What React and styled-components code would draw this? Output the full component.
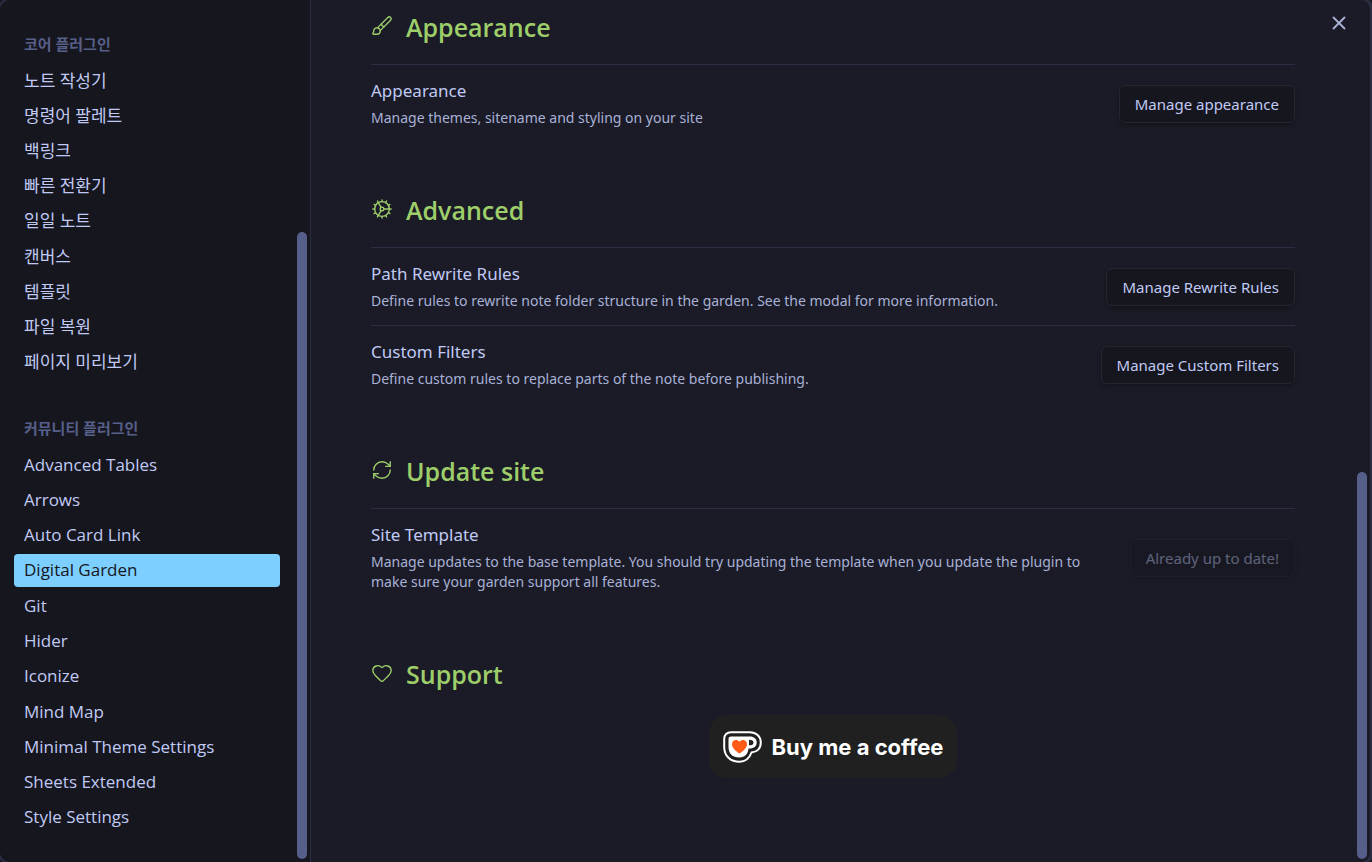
import React from "react";
import styled, { createGlobalStyle } from "styled-components";
import { Brush, Cog, RefreshCw, Heart, X } from "lucide-react";

const GlobalStyle = createGlobalStyle`
  *, *::before, *::after { box-sizing: border-box; }
  body {
    margin: 0;
    background: #16161e;
    color: #c0caf5;
    font-family: "Open Sans", "Noto Sans CJK KR", sans-serif;
    font-size: 17px;
    line-height: 22px;
  }
`;

const Modal = styled.div`
  position: relative;
  display: flex;
  height: 100vh;
  min-height: 600px;
  overflow: hidden;
  border-right: 2px solid #292e42;
  border-radius: 10px;
  background: #1a1b26;
  box-shadow: 0 0 0 2px #292e42;
`;

const Sidebar = styled.nav`
  display: flex;
  flex: none;
  width: 311px;
  border-right: 1px solid #292e42;
  background: #16161e;
`;

const SidebarBody = styled.div`
  display: flex;
  flex: 1;
  flex-direction: column;
  gap: 38px;
  min-width: 0;
  padding: 33px 17px 0 14px;
`;

const GroupTitle = styled.h3`
  margin: 0;
  padding: 0 10px 9px;
  color: #565f89;
  font-size: 15px;
  font-weight: 600;
  line-height: 22px;
`;

const NavList = styled.ul`
  display: grid;
  grid-auto-rows: 1fr;
  gap: 2px;
  min-height: ${(p) => p.$minHeight}px;
  margin: 0;
  padding: 0;
  list-style: none;
`;

const NavItem = styled.li`
  display: flex;
`;

const NavLink = styled.a`
  display: flex;
  flex: 1;
  align-items: center;
  padding: 0 10px;
  border-radius: 4px;
  background: ${(p) => (p.$active ? "#7dcfff" : "transparent")};
  color: ${(p) => (p.$active ? "#16161e" : "#c0caf5")};
  text-decoration: none;
  white-space: nowrap;
`;

const ScrollTrack = styled.div`
  display: flex;
  flex: none;
  flex-direction: column;
  justify-content: flex-end;
  width: 13px;
  padding: 0 3px 3px 0;
`;

const ScrollThumb = styled.div`
  flex: 0 0 ${(p) => p.$size}%;
  border-radius: 5px;
  background: #565f89;
`;

const Content = styled.main`
  flex: 1;
  min-width: 0;
  padding: 10px 62px 0 60px;
  font-family: "Noto Sans", "Noto Sans CJK KR", sans-serif;
`;

const Section = styled.section`
  & + & { padding-top: 51px; }
`;

const Heading = styled.h2`
  display: flex;
  align-items: center;
  gap: 13px;
  margin: 0;
  color: #9ece6a;
  font-family: "Open Sans", "Noto Sans CJK KR", sans-serif;
  font-size: 25px;
  font-weight: 600;
  line-height: 34px;

  svg { flex: none; margin-bottom: 2px; }
`;

const Setting = styled.div`
  display: flex;
  align-items: center;
  gap: 40px;
  padding: 15px 0 14px;
  border-top: 1px solid #292e42;

  ${Heading} + & { margin-top: 20px; }
`;

const SettingInfo = styled.div`
  flex: 1;
  min-width: 0;
`;

const SettingName = styled.div`
  line-height: 22px;
`;

const SettingText = styled.div`
  padding-top: 6px;
  color: #a9b1d6;
  font-size: 14px;
  line-height: 20px;
`;

const Button = styled.button`
  flex: none;
  height: 38px;
  padding: 0 15px;
  border: 1px solid #26272e;
  border-radius: 6px;
  background: #16161e;
  box-shadow: 0 2px 4px rgba(0, 0, 0, 0.3);
  color: #c0caf5;
  font: inherit;
  font-size: 15px;

  &:disabled { opacity: 0.4; }
`;

const CloseButton = styled.button`
  position: absolute;
  top: 12px;
  right: 20px;
  display: flex;
  padding: 0;
  border: 0;
  background: none;
  color: #a9b1d6;
`;

const SupportRow = styled.div`
  display: flex;
  justify-content: center;
  padding-top: 24px;
`;

const CoffeeLink = styled.a`
  display: flex;
  align-items: center;
  gap: 10px;
  height: 63px;
  padding: 0 14px;
  border-radius: 18px;
  background: #202020;
  color: #fff;
  font-family: Inter, "Open Sans", sans-serif;
  font-size: 22px;
  font-weight: 700;
  text-decoration: none;
  white-space: nowrap;
`;

const corePlugins = [
  "노트 작성기", "명령어 팔레트", "백링크", "빠른 전환기", "일일 노트",
  "캔버스", "템플릿", "파일 복원", "페이지 미리보기",
];

const communityPlugins = [
  "Advanced Tables", "Arrows", "Auto Card Link", "Digital Garden", "Git", "Hider",
  "Iconize", "Mind Map", "Minimal Theme Settings", "Sheets Extended", "Style Settings",
];

function NavGroup({ title, items, active, minHeight }) {
  return (
    <div>
      <GroupTitle>{title}</GroupTitle>
      <NavList $minHeight={minHeight}>
        {items.map((item) => (
          <NavItem key={item}>
            <NavLink href="#" $active={item === active} aria-current={item === active ? "page" : undefined}>
              {item}
            </NavLink>
          </NavItem>
        ))}
      </NavList>
    </div>
  );
}

function SettingRow({ name, text, action, disabled }) {
  return (
    <Setting>
      <SettingInfo>
        <SettingName>{name}</SettingName>
        <SettingText>{text}</SettingText>
      </SettingInfo>
      <Button type="button" disabled={disabled}>{action}</Button>
    </Setting>
  );
}

function CupLogo() {
  return (
    <svg width="39" height="32" viewBox="0 0 39 32" aria-hidden="true">
      <path
        d="M8 1.2H27C33 1.2 37.8 5.500 37.800 11.500C37.800 17.500 34 21 28.500 21.500C26.500 27 22.500 30.800 16.500 30.800C7.500 30.800 1.200 25 1.200 16V8C1.200 3.800 4 1.200 8 1.200Z"
        fill="#202020" stroke="#fff" strokeWidth="2"
      />
      <path
        fillRule="evenodd"
        d="M8 5.500H27C31 5.500 33.700 8 33.700 11.500C33.700 15.300 31 17.500 26.500 17.500H25.500C25 23 22 26.500 16.500 26.500C9.500 26.500 5.500 22.500 5.500 16V8C5.500 6.300 6.500 5.500 8 5.500ZM26 8.700V14.300C29 14.300 30.500 13.500 30.500 11.500C30.500 9.500 29 8.700 26 8.700Z"
        fill="#fff"
      />
      <path
        d="M16.500 22.500C12 19.500 9 16.500 9 13.200C9 8.800 14 7.700 16.500 10.800C19 7.700 24 8.800 24 13.200C24 16.500 21 19.500 16.500 22.500Z"
        fill="#ff5a16"
      />
    </svg>
  );
}

const icon = { size: 22, strokeWidth: 1.5, "aria-hidden": true };

export default function App() {
  return (
    <>
      <GlobalStyle />
      <Modal>
        <Sidebar>
          <SidebarBody>
            <NavGroup title="코어 플러그인" items={corePlugins} minHeight={315} />
            <NavGroup title="커뮤니티 플러그인" items={communityPlugins} active="Digital Garden" minHeight={386} />
          </SidebarBody>
          <ScrollTrack><ScrollThumb $size={73} /></ScrollTrack>
        </Sidebar>
        <Content>
          <Section>
            <Heading><Brush {...icon} />Appearance</Heading>
            <SettingRow
              name="Appearance"
              text="Manage themes, sitename and styling on your site"
              action="Manage appearance"
            />
          </Section>
          <Section>
            <Heading><Cog {...icon} />Advanced</Heading>
            <SettingRow
              name="Path Rewrite Rules"
              text="Define rules to rewrite note folder structure in the garden. See the modal for more information."
              action="Manage Rewrite Rules"
            />
            <SettingRow
              name="Custom Filters"
              text="Define custom rules to replace parts of the note before publishing."
              action="Manage Custom Filters"
            />
          </Section>
          <Section>
            <Heading><RefreshCw {...icon} />Update site</Heading>
            <SettingRow
              name="Site Template"
              text="Manage updates to the base template. You should try updating the template when you update the plugin to make sure your garden support all features."
              action="Already up to date!"
              disabled
            />
          </Section>
          <Section>
            <Heading><Heart {...icon} />Support</Heading>
            <SupportRow>
              <CoffeeLink href="#"><CupLogo />Buy me a coffee</CoffeeLink>
            </SupportRow>
          </Section>
        </Content>
        <ScrollTrack><ScrollThumb $size={45} /></ScrollTrack>
        <CloseButton type="button" aria-label="Close"><X size={22} strokeWidth={2} aria-hidden /></CloseButton>
      </Modal>
    </>
  );
}
